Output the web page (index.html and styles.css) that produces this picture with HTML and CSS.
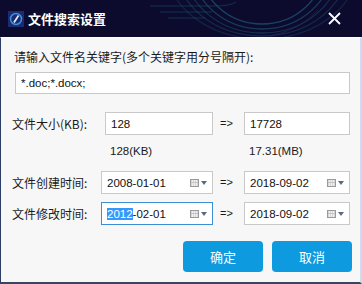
FILE: index.html
```html
<!DOCTYPE html>
<html lang="zh-CN">
<head>
    <meta charset="UTF-8">
    <title>文件搜索设置</title>
    <link rel="stylesheet" href="styles.css">
</head>
<body>
    <div class="window">
        <!-- Barre de titre -->
        <div class="titlebar">
            <svg class="swirl" width="362" height="37" viewBox="0 0 362 37">
                <g fill="none" stroke="#22688a" stroke-width="1.3">
                    <ellipse cx="262" cy="-34" rx="62" ry="58" opacity="0.6"/>
                    <ellipse cx="262" cy="-34" rx="70" ry="63" opacity="0.5"/>
                    <ellipse cx="262" cy="-34" rx="78" ry="67" opacity="0.4"/>
                    <ellipse cx="262" cy="-34" rx="86" ry="70" opacity="0.32"/>
                    <ellipse cx="262" cy="-34" rx="96" ry="73" opacity="0.25"/>
                </g>
                <g fill="none" stroke="#1a4f6e" stroke-width="1" opacity="0.55">
                    <path d="M150 6 H215 Q230 6 236 2"/>
                    <path d="M160 12 H212"/>
                    <path d="M168 18 H205"/>
                </g>
                <g fill="none" stroke="#34285a" stroke-width="1" opacity="0.6">
                    <path d="M270 36 Q300 30 318 10"/>
                </g>
            </svg>
            <span class="app-icon">
                <svg width="16" height="16" viewBox="0 0 16 16">
                    <rect x="0" y="0" width="16" height="16" fill="#1c2a6e"/>
                    <circle cx="8" cy="8" r="5.5" fill="none" stroke="#3f8fe0" stroke-width="1.5"/>
                    <path d="M10.5 4.5 L6 11.5" stroke="#e8f4ff" stroke-width="1.6"/>
                </svg>
            </span>
            <span class="title">文件搜索设置</span>
            <span class="close">
                <svg width="13" height="13" viewBox="0 0 13 13">
                    <path d="M1 1 L12 12 M12 1 L1 12" stroke="#ffffff" stroke-width="1.8"/>
                </svg>
            </span>
        </div>

        <!-- Contenu -->
        <div class="content">
            <div class="kw-label">请输入文件名关键字(多个关键字用分号隔开):</div>
            <div class="field kw-field">*.doc;*.docx;</div>

            <div class="form-grid">
                <span class="label">文件大小(KB):</span>
                <div class="field size-field">128</div>
                <span class="arrow">=&gt;</span>
                <div class="field">17728</div>

                <span></span>
                <span class="hint size-hint">128(KB)</span>
                <span></span>
                <span class="hint">17.31(MB)</span>

                <span class="label">文件创建时间:</span>
                <div class="field date-field">
                    <span class="date-text">2008-01-01</span>
                    <span class="cal"></span><span class="caret"></span>
                </div>
                <span class="arrow">=&gt;</span>
                <div class="field date-field">
                    <span class="date-text">2018-09-02</span>
                    <span class="cal"></span><span class="caret"></span>
                </div>

                <span class="label">文件修改时间:</span>
                <div class="field date-field focused">
                    <span class="date-text"><span class="sel">2012</span>-02-01</span>
                    <span class="cal"></span><span class="caret"></span>
                </div>
                <span class="arrow">=&gt;</span>
                <div class="field date-field">
                    <span class="date-text">2018-09-02</span>
                    <span class="cal"></span><span class="caret"></span>
                </div>
            </div>

            <div class="buttons">
                <button class="btn">确定</button>
                <button class="btn">取消</button>
            </div>
        </div>
    </div>
</body>
</html>
```
FILE: styles.css
```css
* {
    margin: 0;
    padding: 0;
    box-sizing: border-box;
}

body {
    width: 362px;
    height: 284px;
    overflow: hidden;
    background: #0c0b2d;
    font-family: "Noto Sans CJK SC", "Liberation Sans", sans-serif;
    font-size: 12px;
    color: #1a1a1a;
}

.window {
    width: 362px;
    height: 284px;
    display: flex;
    flex-direction: column;
    background: #0c0b2d;
}

/* Barre de titre */
.titlebar {
    position: relative;
    height: 37px;
    display: flex;
    align-items: center;
    padding-left: 8px;
    background: #0c0b2d;
    flex-shrink: 0;
}

.swirl {
    position: absolute;
    top: 0;
    left: 0;
}

.app-icon {
    position: relative;
    display: flex;
    width: 16px;
    height: 16px;
}

.title {
    position: relative;
    margin-left: 4px;
    color: #ffffff;
    font-size: 13px;
    font-weight: bold;
}

.close {
    position: relative;
    display: flex;
    margin-left: auto;
    margin-right: 21px;
}

/* Contenu */
.content {
    flex: 1;
    background: #f7f7f7;
    border-left: 1px solid #2d3f66;
    border-right: 2px solid #cddcee;
    border-bottom: 2px solid #3a4660;
    border-top: 1px solid #ffffff;
    padding: 10px 0 0 11px;
    display: flex;
    flex-direction: column;
}

.kw-label {
    padding-left: 2px;
    height: 18px;
    line-height: 18px;
}

.field {
    height: 23px;
    background: #ffffff;
    border: 1px solid #c9c9c9;
    display: flex;
    align-items: center;
    padding-left: 5px;
    font-family: "Liberation Sans", sans-serif;
    font-size: 11.5px;
    color: #111;
}

.kw-field {
    margin: 6px 0 0 3px;
    width: 335px;
    height: 22px;
}

.form-grid {
    margin-top: 18px;
    display: grid;
    grid-template-columns: 89px 112px 31px 106px;
    grid-template-rows: 23px 36px 31px 23px;
    align-items: start;
}

.label {
    white-space: nowrap;
    line-height: 23px;
}

.size-field {
    margin-left: 4px;
}

.arrow {
    font-family: "Liberation Sans", sans-serif;
    font-size: 11px;
    line-height: 23px;
    padding-left: 7px;
}

.hint {
    font-family: "Liberation Sans", sans-serif;
    font-size: 11.5px;
    line-height: 14px;
    margin-top: 9px;
    padding-left: 5px;
}

.size-hint {
    padding-left: 9px;
}

.date-field {
    padding-right: 4px;
}

.date-field.focused {
    border-color: #3c8fd6;
}

.date-text {
    flex: 1;
}

.sel {
    background: #3399ff;
    color: #ffffff;
}

.cal {
    width: 9px;
    height: 8px;
    border: 1px solid #9a9a9a;
    background:
        linear-gradient(#c4c4c4, #c4c4c4) 0 2px / 100% 1px no-repeat,
        linear-gradient(90deg, #d8d8d8 50%, #efefef 50%) 0 0 / 2px 100%;
    margin-right: 2px;
}

.caret {
    width: 0;
    height: 0;
    border-left: 3.5px solid transparent;
    border-right: 3.5px solid transparent;
    border-top: 4px solid #5a6a80;
    margin-right: 1px;
}

/* Boutons */
.buttons {
    margin-top: 16px;
    display: flex;
    justify-content: flex-end;
    gap: 9px;
    padding-right: 8px;
}

.btn {
    width: 80px;
    height: 31px;
    border: none;
    border-radius: 4px;
    background: #0e9ade;
    color: #ffffff;
    font-family: "Noto Sans CJK SC", sans-serif;
    font-size: 13px;
}
```
